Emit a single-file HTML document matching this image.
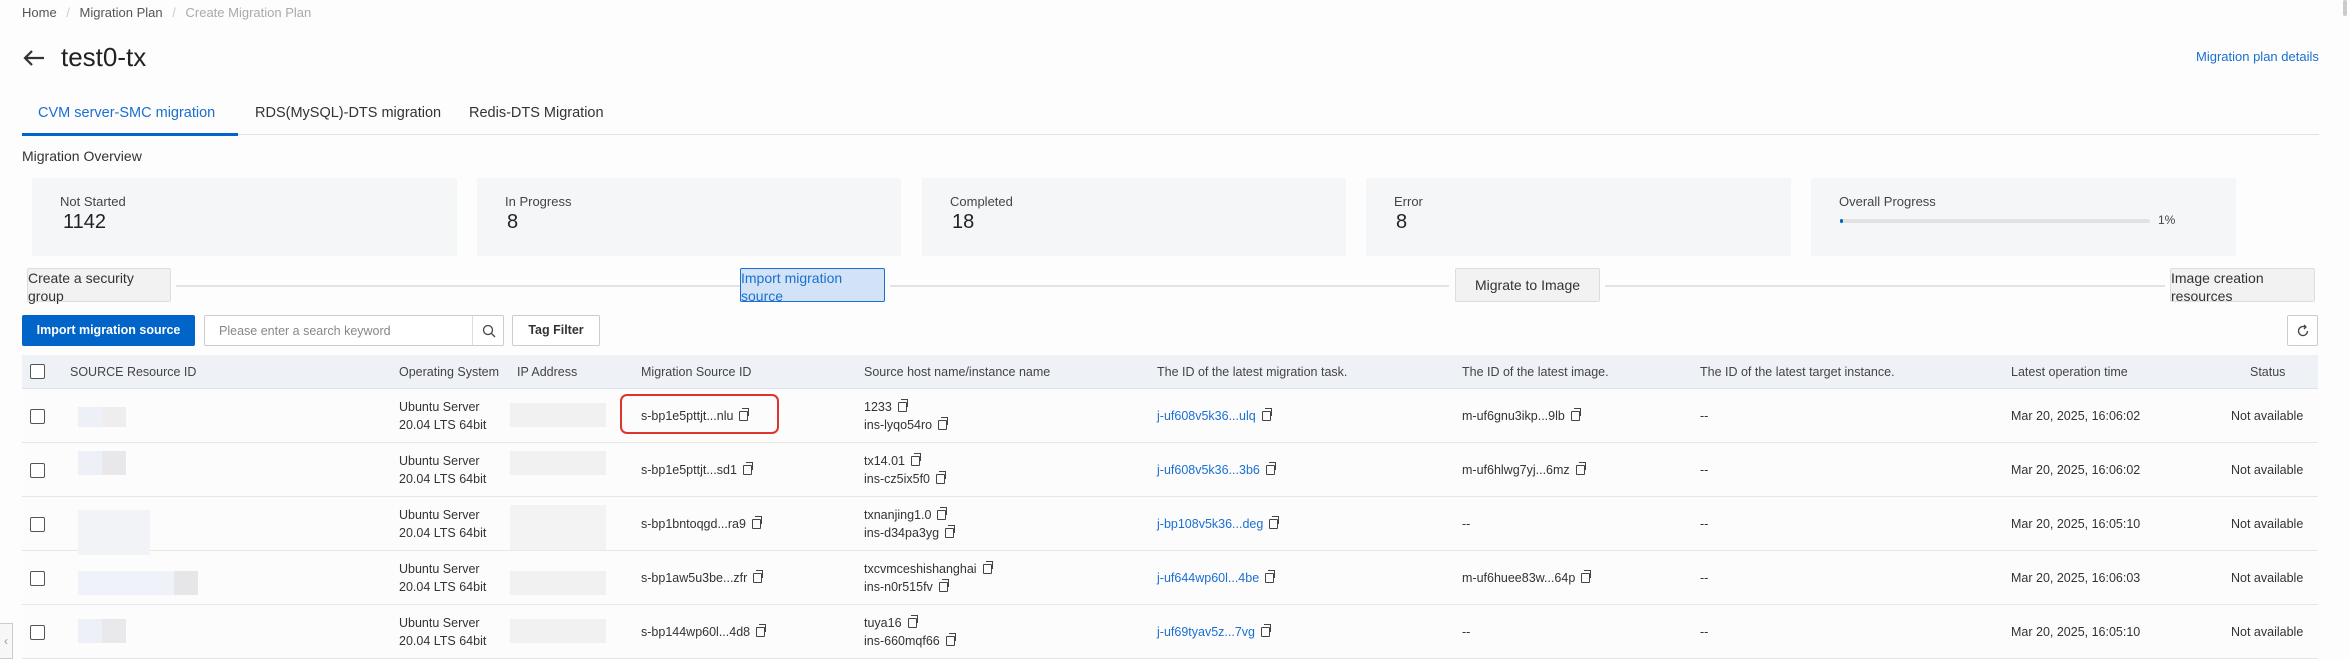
<!DOCTYPE html>
<html><head><meta charset="utf-8"><style>
*{margin:0;padding:0;box-sizing:border-box}
body{width:2349px;height:658px;overflow:hidden;background:#fdfdfd;font-family:"Liberation Sans",sans-serif;color:#333;position:relative}
.a{position:absolute;white-space:nowrap}
.card{position:absolute;top:178px;height:78px;background:#f5f6f8;border-radius:2px}
.card .l{position:absolute;left:28px;top:16px;font-size:13px;color:#444}
.card .v{position:absolute;left:30px;top:33px;font-size:20px;color:#222}
.step{position:absolute;top:268px;height:34px;background:#f2f2f2;border:1px solid #ddd;border-radius:2px;font-size:14px;line-height:18px;color:#333}
.ln{position:absolute;top:285px;height:2px;background:#e3e3e3}
.th{position:absolute;top:365px;font-size:12.5px;color:#444;white-space:nowrap}
.cb{position:absolute;left:30px;width:15px;height:15px;border:1.5px solid #555;border-radius:2px;background:#fff}
.t{position:absolute;font-size:12.5px;color:#333;white-space:nowrap;line-height:18px}
.lk{color:#1a6fd0}
.cp{display:inline-block;width:9px;height:10px;border:1.3px solid #444;margin-left:6px;position:relative;top:1px;border-radius:1px}
.cp:after{content:"";position:absolute;left:2px;top:-4px;width:6px;height:7px;border-top:1.3px solid #444;border-right:1.3px solid #444}
.row{position:absolute;left:22px;width:2296px;height:54px;background:#fcfcfd;border-bottom:1px solid #e6e6e6}
.blur{position:absolute;background:#eceef2}
</style></head><body>
<div class="a" style="left:22px;top:5px;font-size:13px;color:#555">Home <span style="color:#ccc;margin:0 6px">/</span> Migration Plan <span style="color:#ccc;margin:0 6px">/</span> <span style="color:#aaa">Create Migration Plan</span></div>
<svg class="a" style="left:22px;top:48px" width="24" height="20" viewBox="0 0 24 20"><path d="M22 10H3M10 3L3 10l7 7" stroke="#333" stroke-width="2.2" fill="none"/></svg>
<div class="a" style="left:61px;top:42px;font-size:26px;color:#222">test0-tx</div>
<div class="a lk" style="left:2196px;top:49px;font-size:13px">Migration plan details</div>
<div class="a" style="left:38px;top:105px;font-size:14.5px;color:#1a6fd0">CVM server-SMC migration</div>
<div class="a" style="left:255px;top:105px;font-size:14.5px;color:#333">RDS(MySQL)-DTS migration</div>
<div class="a" style="left:469px;top:105px;font-size:14.5px;color:#333">Redis-DTS Migration</div>
<div class="a" style="left:22px;top:134px;width:2297px;height:1px;background:#e2e2e2"></div>
<div class="a" style="left:22px;top:133px;width:216px;height:3px;background:#0064c8"></div>
<div class="a" style="left:22px;top:148px;font-size:14px;color:#333">Migration Overview</div>
<div class="card" style="left:32px;width:425px"><div class="l">Not Started</div><div class="v" style="left:31px">1142</div></div>
<div class="card" style="left:477px;width:424px"><div class="l">In Progress</div><div class="v">8</div></div>
<div class="card" style="left:922px;width:424px"><div class="l">Completed</div><div class="v">18</div></div>
<div class="card" style="left:1366px;width:425px"><div class="l">Error</div><div class="v">8</div></div>
<div class="card" style="left:1811px;width:425px"><div class="l">Overall Progress</div>
<div style="position:absolute;left:29px;top:41px;width:310px;height:4px;background:#e2e2e2;border-radius:2px"><div style="width:3px;height:4px;background:#0064c8;border-radius:2px"></div></div>
<div style="position:absolute;left:347px;top:35px;font-size:12px;color:#444">1%</div></div>
<div class="step" style="left:27px;width:144px">Create a security<br>group</div>
<div class="ln" style="left:176px;width:564px"></div>
<div class="step" style="left:740px;width:145px;background:#d3e3f7;border-color:#1a6fd0;color:#1a6fd0">Import migration<br>source</div>
<div class="ln" style="left:890px;width:559px"></div>
<div class="step" style="left:1455px;width:145px;line-height:32px;text-align:center">Migrate to Image</div>
<div class="ln" style="left:1605px;width:560px"></div>
<div class="step" style="left:2170px;width:145px">Image creation<br>resources</div>
<div class="a" style="left:22px;top:315px;width:173px;height:31px;background:#0064c8;border-radius:2px;color:#fff;font-size:12.5px;font-weight:bold;line-height:31px;text-align:center">Import migration source</div>
<div class="a" style="left:204px;top:315px;width:300px;height:31px;border:1px solid #ccc;background:#fff;border-radius:2px"><span style="position:absolute;left:14px;top:8px;font-size:12.5px;color:#888">Please enter a search keyword</span><div style="position:absolute;left:267px;top:0;width:1px;height:29px;background:#ddd"></div><svg style="position:absolute;left:277px;top:8px" width="14" height="14" viewBox="0 0 14 14"><circle cx="6" cy="6" r="4.5" stroke="#444" stroke-width="1.3" fill="none"/><path d="M9.5 9.5L13 13" stroke="#444" stroke-width="1.3"/></svg></div>
<div class="a" style="left:512px;top:315px;width:88px;height:31px;border:1px solid #ccc;background:#fff;border-radius:2px;font-size:12.5px;font-weight:bold;line-height:29px;text-align:center;color:#333">Tag Filter</div>
<div class="a" style="left:2287px;top:315px;width:31px;height:31px;border:1px solid #ccc;background:#fff;border-radius:2px"><svg style="position:absolute;left:8px;top:8px" width="14" height="14" viewBox="0 0 14 14"><path d="M11.5 7A4.5 4.5 0 1 1 9 3" stroke="#444" stroke-width="1.3" fill="none"/><path d="M8 1l2 2-2 2" stroke="#444" stroke-width="1.3" fill="none"/></svg></div>
<div class="a" style="left:22px;top:355px;width:2296px;height:34px;background:#eef1f6;border-bottom:1px solid #dfe2e8"></div>
<div class="cb" style="top:364px"></div>
<div class="th" style="left:70px">SOURCE Resource ID</div>
<div class="th" style="left:399px">Operating System</div>
<div class="th" style="left:517px">IP Address</div>
<div class="th" style="left:641px">Migration Source ID</div>
<div class="th" style="left:864px">Source host name/instance name</div>
<div class="th" style="left:1157px">The ID of the latest migration task.</div>
<div class="th" style="left:1462px">The ID of the latest image.</div>
<div class="th" style="left:1700px">The ID of the latest target instance.</div>
<div class="th" style="left:2011px">Latest operation time</div>
<div class="th" style="left:2250px">Status</div>

<div class="row" style="top:389px"></div>
<div class="row" style="top:443px"></div>
<div class="row" style="top:497px"></div>
<div class="row" style="top:551px"></div>
<div class="row" style="top:605px"></div>

<div class="blur" style="left:78px;top:407px;width:48px;height:20px;background:linear-gradient(90deg,#edf0f7 50%,#eeeeef 50%)"></div>
<div class="blur" style="left:78px;top:451px;width:48px;height:24px;background:linear-gradient(90deg,#edf0f7 50%,#e8e8ea 50%)"></div>
<div class="blur" style="left:78px;top:510px;width:72px;height:45px;background:#f2f3f6"></div>
<div class="blur" style="left:78px;top:571px;width:120px;height:24px;background:linear-gradient(90deg,#eff2f8 80%,#e6e6e9 80%)"></div>
<div class="blur" style="left:78px;top:619px;width:48px;height:24px;background:linear-gradient(90deg,#edf0f7 50%,#e9e9eb 50%)"></div>
<div class="blur" style="left:510px;top:403px;width:96px;height:24px;background:#f1f1f2"></div>
<div class="blur" style="left:510px;top:451px;width:96px;height:24px;background:#f1f1f2"></div>
<div class="blur" style="left:510px;top:505px;width:96px;height:45px;background:#f3f3f4"></div>
<div class="blur" style="left:510px;top:571px;width:96px;height:24px;background:#f1f1f2"></div>
<div class="blur" style="left:510px;top:619px;width:96px;height:24px;background:#f1f1f2"></div>

<div class="a" style="left:620px;top:394px;width:159px;height:40px;border:2px solid #e0332d;border-radius:7px"></div>

<!-- rows -->
<div class="cb" style="top:409px"></div><div class="cb" style="top:463px"></div><div class="cb" style="top:517px"></div><div class="cb" style="top:571px"></div><div class="cb" style="top:625px"></div>

<div class="t" style="left:399px;top:398px">Ubuntu Server<br>20.04 LTS 64bit</div>
<div class="t" style="left:399px;top:452px">Ubuntu Server<br>20.04 LTS 64bit</div>
<div class="t" style="left:399px;top:506px">Ubuntu Server<br>20.04 LTS 64bit</div>
<div class="t" style="left:399px;top:560px">Ubuntu Server<br>20.04 LTS 64bit</div>
<div class="t" style="left:399px;top:614px">Ubuntu Server<br>20.04 LTS 64bit</div>

<div class="t" style="left:641px;top:407px">s-bp1e5pttjt...nlu<span class="cp"></span></div>
<div class="t" style="left:641px;top:461px">s-bp1e5pttjt...sd1<span class="cp"></span></div>
<div class="t" style="left:641px;top:515px">s-bp1bntoqgd...ra9<span class="cp"></span></div>
<div class="t" style="left:641px;top:569px">s-bp1aw5u3be...zfr<span class="cp"></span></div>
<div class="t" style="left:641px;top:623px">s-bp144wp60l...4d8<span class="cp"></span></div>

<div class="t" style="left:864px;top:398px">1233<span class="cp"></span><br>ins-lyqo54ro<span class="cp"></span></div>
<div class="t" style="left:864px;top:452px">tx14.01<span class="cp"></span><br>ins-cz5ix5f0<span class="cp"></span></div>
<div class="t" style="left:864px;top:506px">txnanjing1.0<span class="cp"></span><br>ins-d34pa3yg<span class="cp"></span></div>
<div class="t" style="left:864px;top:560px">txcvmceshishanghai<span class="cp"></span><br>ins-n0r515fv<span class="cp"></span></div>
<div class="t" style="left:864px;top:614px">tuya16<span class="cp"></span><br>ins-660mqf66<span class="cp"></span></div>

<div class="t lk" style="left:1157px;top:407px">j-uf608v5k36...ulq<span class="cp"></span></div>
<div class="t lk" style="left:1157px;top:461px">j-uf608v5k36...3b6<span class="cp"></span></div>
<div class="t lk" style="left:1157px;top:515px">j-bp108v5k36...deg<span class="cp"></span></div>
<div class="t lk" style="left:1157px;top:569px">j-uf644wp60l...4be<span class="cp"></span></div>
<div class="t lk" style="left:1157px;top:623px">j-uf69tyav5z...7vg<span class="cp"></span></div>

<div class="t" style="left:1462px;top:407px">m-uf6gnu3ikp...9lb<span class="cp"></span></div>
<div class="t" style="left:1462px;top:461px">m-uf6hlwg7yj...6mz<span class="cp"></span></div>
<div class="t" style="left:1462px;top:515px">--</div>
<div class="t" style="left:1462px;top:569px">m-uf6huee83w...64p<span class="cp"></span></div>
<div class="t" style="left:1462px;top:623px">--</div>

<div class="t" style="left:1700px;top:407px">--</div><div class="t" style="left:1700px;top:461px">--</div><div class="t" style="left:1700px;top:515px">--</div><div class="t" style="left:1700px;top:569px">--</div><div class="t" style="left:1700px;top:623px">--</div>

<div class="t" style="left:2011px;top:407px">Mar 20, 2025, 16:06:02</div>
<div class="t" style="left:2011px;top:461px">Mar 20, 2025, 16:06:02</div>
<div class="t" style="left:2011px;top:515px">Mar 20, 2025, 16:05:10</div>
<div class="t" style="left:2011px;top:569px">Mar 20, 2025, 16:06:03</div>
<div class="t" style="left:2011px;top:623px">Mar 20, 2025, 16:05:10</div>

<div class="t" style="left:2231px;top:407px">Not available</div>
<div class="t" style="left:2231px;top:461px">Not available</div>
<div class="t" style="left:2231px;top:515px">Not available</div>
<div class="t" style="left:2231px;top:569px">Not available</div>
<div class="t" style="left:2231px;top:623px">Not available</div>

<div class="a" style="left:0;top:623px;width:13px;height:36px;border:1px solid #ccc;border-left:none;background:#f7f7f7;font-size:12px;color:#999;line-height:34px;text-align:center">‹</div>
<div class="a" style="left:2343px;top:0;width:4px;height:16px;background:#ccc;border-radius:2px"></div>
</body></html>
